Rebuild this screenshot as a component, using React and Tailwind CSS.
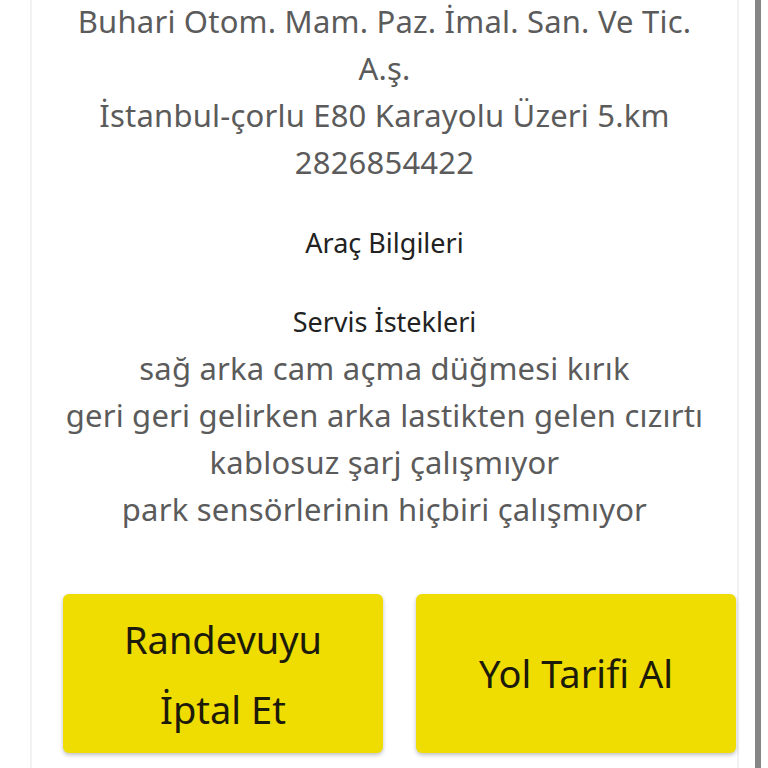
import React from 'react';

const addressLines = [
  'Buhari Otom. Mam. Paz. İmal. San. Ve Tic.',
  'A.ş.',
  'İstanbul-çorlu E80 Karayolu Üzeri 5.km',
  '2826854422',
];

const requests = [
  'sağ arka cam açma düğmesi kırık',
  'geri geri gelirken arka lastikten gelen cızırtı',
  'kablosuz şarj çalışmıyor',
  'park sensörlerinin hiçbiri çalışmıyor',
];

const AppointmentDetail = () => {
  return (
    <div className="w-[768px] h-[768px] overflow-hidden bg-white flex font-['Noto_Sans',sans-serif]">
      <div className="w-[30px] shrink-0" />
      <div className="w-[709px] shrink-0 border-x-2 border-[#f1f1f1] bg-white flex flex-col items-center">
        <div className="w-full -mt-[2px] text-center text-[31px] leading-[47px] tracking-[0.2px] text-[#5b5b5b]">
          {addressLines.map((line) => (
            <p key={line} className="whitespace-nowrap">{line}</p>
          ))}
        </div>

        <p className="mt-[33px] text-center text-[27px] leading-[47px] text-[#222]">Araç Bilgileri</p>

        <div className="mt-[32px] w-full text-center text-[#5b5b5b]">
          <p className="text-[27px] leading-[47px] text-[#222]">Servis İstekleri</p>
          {requests.map((line) => (
            <p key={line} className="whitespace-nowrap text-[31px] leading-[47px] tracking-[0.2px]">{line}</p>
          ))}
        </div>

        <div className="mt-[61px] w-full flex pl-[31px] gap-[33px]">
          <button className="w-[320px] h-[159px] rounded-md bg-[#efdc00] shadow-[0_2px_4px_rgba(0,0,0,0.25)] text-[38px] leading-[70px] text-[#1c1a08] flex flex-col items-center justify-center">
            <span>Randevuyu</span>
            <span>İptal Et</span>
          </button>
          <button className="w-[320px] h-[159px] rounded-md bg-[#efdc00] shadow-[0_2px_4px_rgba(0,0,0,0.25)] text-[38px] text-[#1c1a08] flex items-center justify-center">
            Yol Tarifi Al
          </button>
        </div>
      </div>
      <div className="w-[16px] shrink-0" />
      <div className="w-[6px] shrink-0 bg-[#858585]" />
    </div>
  );
};

export default AppointmentDetail;
